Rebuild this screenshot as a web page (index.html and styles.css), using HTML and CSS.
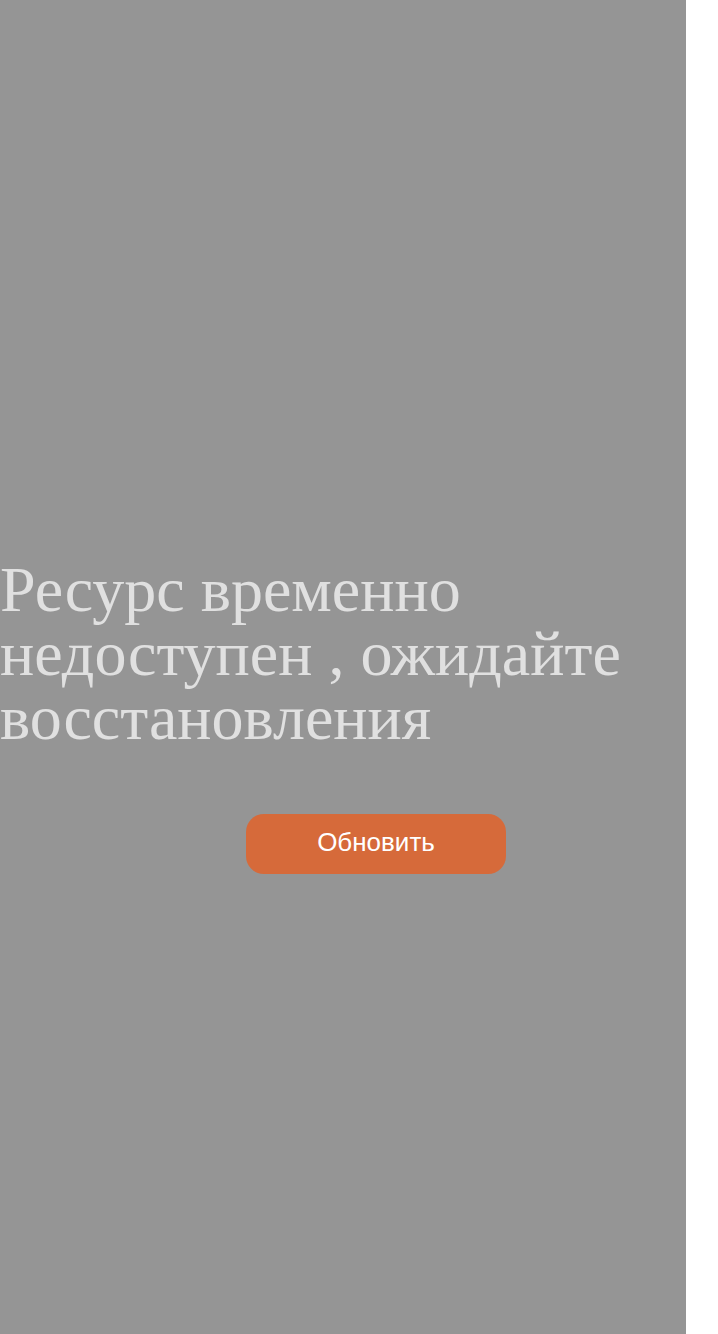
FILE: index.html
```html
<!DOCTYPE html>
<html lang="ru">
<head>
<meta charset="utf-8">
<title>Ресурс временно недоступен</title>
<link rel="stylesheet" href="styles.css">
</head>
<body>
<div class="screen">
  <h1 class="message">Ресурс временно недоступен , ожидайте восстановления</h1>
  <button class="refresh">Обновить</button>
</div>
</body>
</html>
```

FILE: styles.css
```css
html, body {
  margin: 0;
  padding: 0;
  background: #ffffff;
}
.screen {
  box-sizing: border-box;
  width: 686px;
  height: 1334px;
  background: #959595;
  padding-top: 558px;
  display: flex;
  flex-direction: column;
  align-items: flex-start;
}
.message {
  margin: 0;
  font-family: "Liberation Serif", "Times New Roman", serif;
  font-weight: normal;
  font-size: 64px;
  line-height: 64px;
  color: #e0e0e0;
}
.refresh {
  margin: 64px 0 0 246px;
  width: 260px;
  height: 60px;
  border: none;
  border-radius: 18px;
  background: #d66a3a;
  color: #ffffff;
  font-family: "Liberation Sans", Arial, sans-serif;
  font-size: 26px;
  line-height: 56px;
  padding: 0 0 4px;
}
```
